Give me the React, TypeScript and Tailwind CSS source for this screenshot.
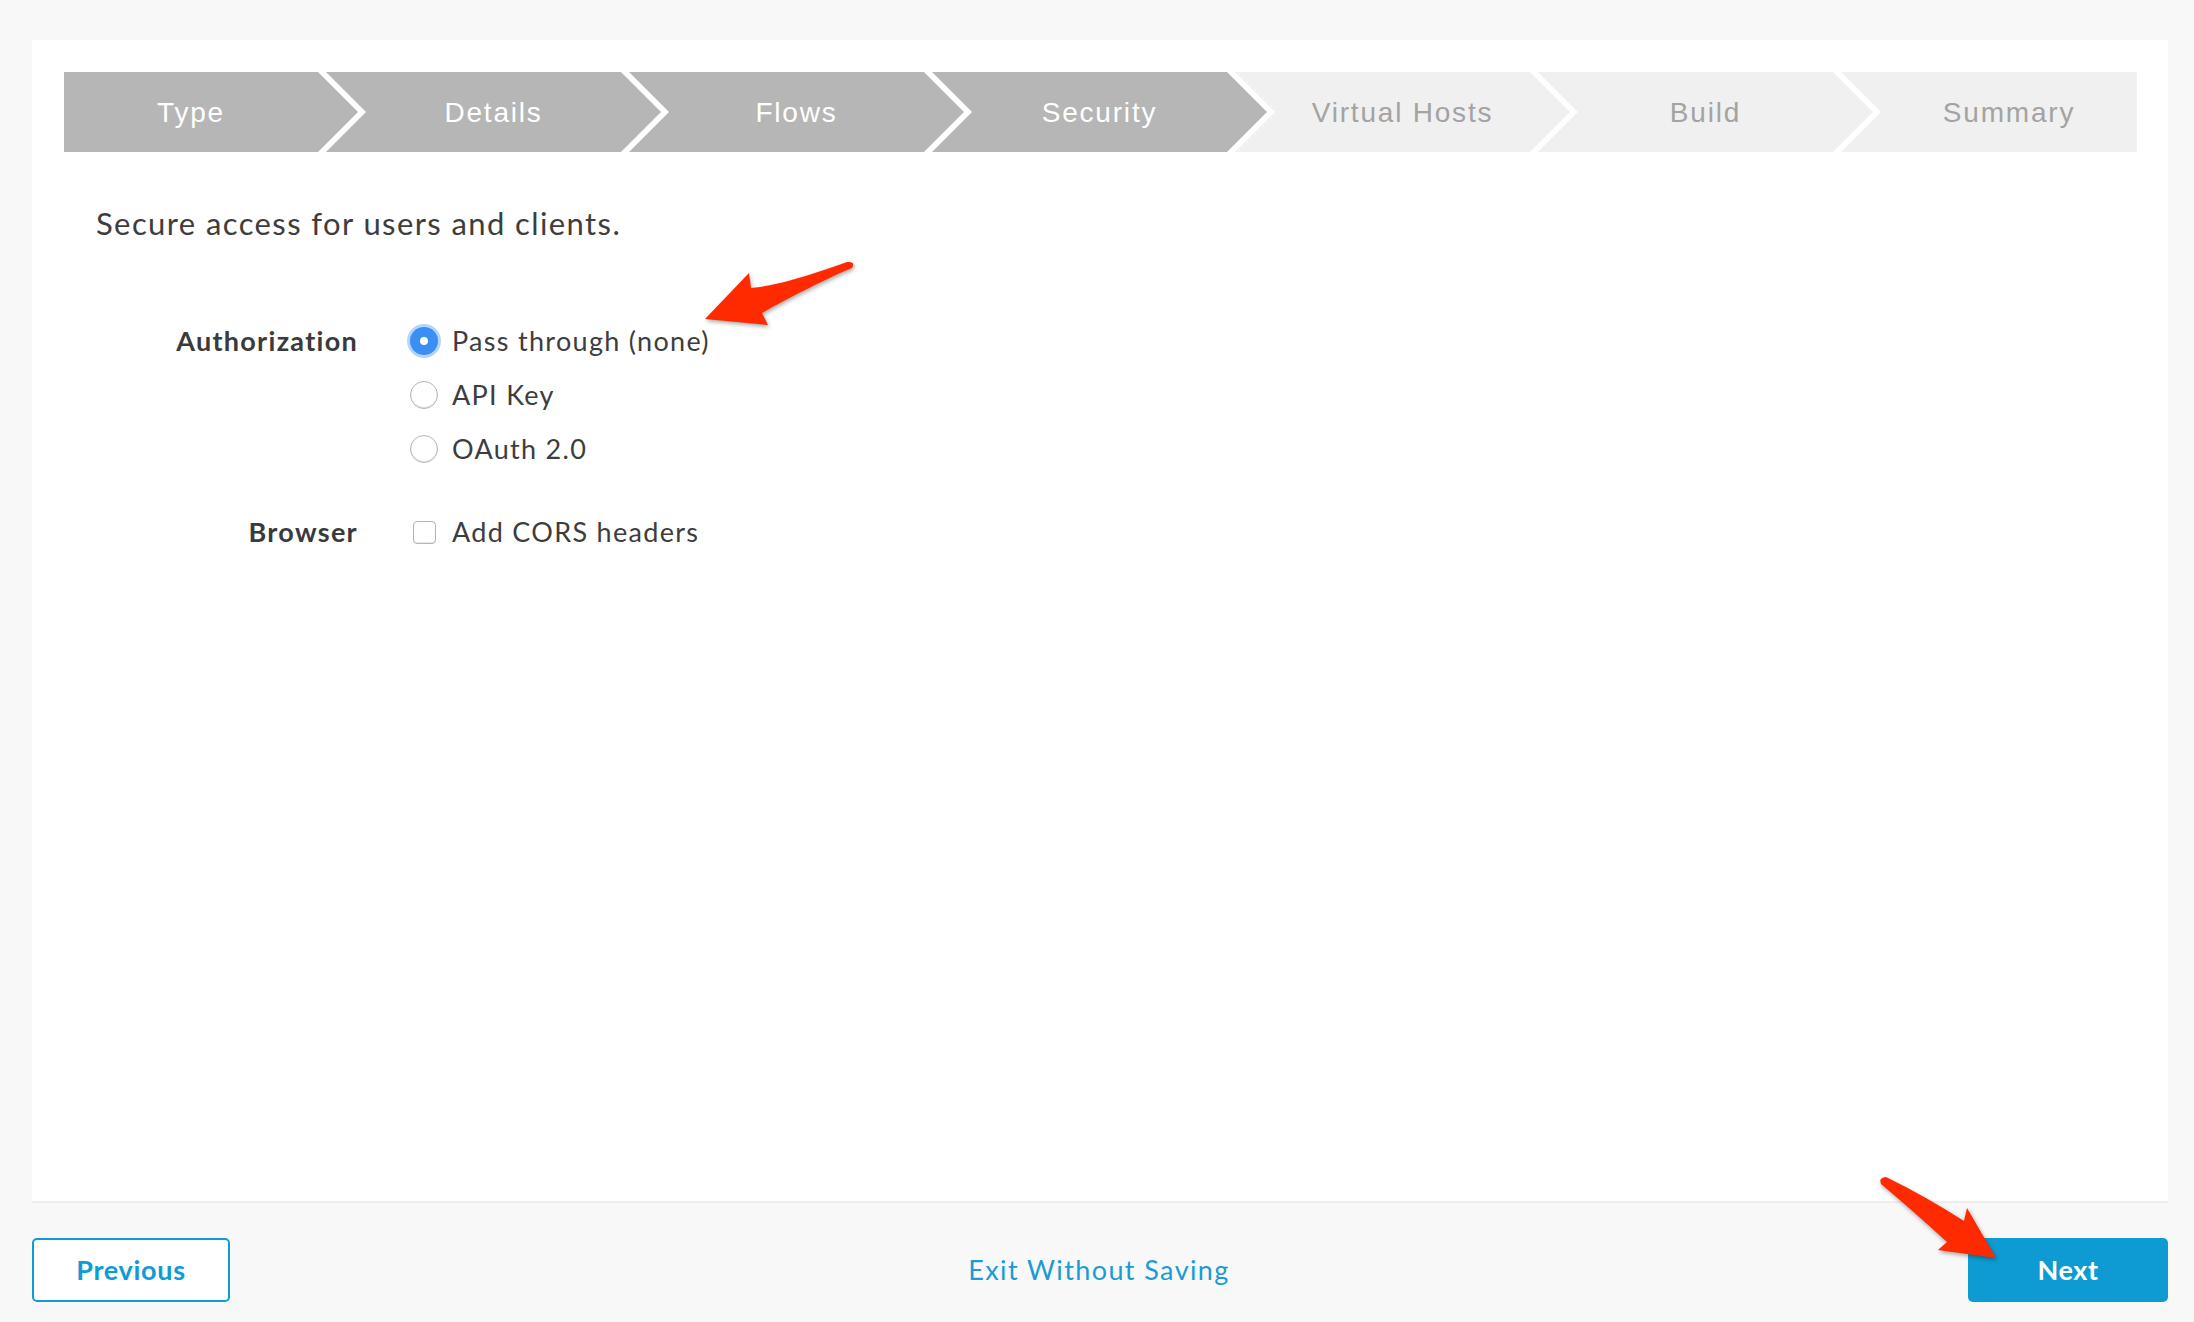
import React from 'react';

type Step = { label: string; done: boolean };

const steps: Step[] = [
  { label: 'Type', done: true },
  { label: 'Details', done: true },
  { label: 'Flows', done: true },
  { label: 'Security', done: true },
  { label: 'Virtual Hosts', done: false },
  { label: 'Build', done: false },
  { label: 'Summary', done: false },
];

function Stepper() {
  return (
    <div className="flex h-[80px] w-[2073px]">
      {steps.map((s, i) => {
        const colors = s.done ? 'bg-[#b6b6b6] text-white' : 'bg-[#f0f0f0] text-[#a3a3a3]';
        let shape = '';
        if (i === 0) {
          shape =
            'w-[294px] shrink-0 pr-[40px] [clip-path:polygon(0_0,calc(100%_-_40px)_0,100%_50%,calc(100%_-_40px)_100%,0_100%)]';
        } else if (i === steps.length - 1) {
          shape = 'flex-1 -ml-[32px] pl-[40px] [clip-path:polygon(0_0,100%_0,100%_100%,0_100%,40px_50%)]';
        } else {
          shape =
            'w-[335px] shrink-0 -ml-[32px] px-[40px] [clip-path:polygon(0_0,calc(100%_-_40px)_0,100%_50%,calc(100%_-_40px)_100%,0_100%,40px_50%)]';
        }
        return (
          <div
            key={s.label}
            className={`${shape} ${colors} h-full flex items-center justify-center pt-[2px] font-['Liberation_Sans',Arial,sans-serif] text-[28px] tracking-[1.8px]`}
          >
            {s.label}
          </div>
        );
      })}
    </div>
  );
}

function RadioOn() {
  return (
    <span className="w-[28px] h-[28px] rounded-full bg-[#3b8ef2] shadow-[0_0_0_3px_rgba(90,160,246,0.45)] flex items-center justify-center shrink-0">
      <span className="w-[8px] h-[8px] rounded-full bg-white" />
    </span>
  );
}

function RadioOff() {
  return (
    <span className="w-[28px] h-[28px] rounded-full bg-white border border-[#b4b4b4] shadow-[inset_0_-1px_1px_rgba(0,0,0,0.12)] shrink-0" />
  );
}

function Checkbox() {
  return (
    <span className="w-[28px] h-[28px] flex items-center justify-center shrink-0">
      <span className="w-[23px] h-[23px] rounded-[4px] bg-white border border-[#b4b4b4] shadow-[inset_0_-1px_1px_rgba(0,0,0,0.1)]" />
    </span>
  );
}

function Row({ control, label }: { control: React.ReactNode; label: string }) {
  return (
    <div className="flex items-center h-[54px] gap-[14px]">
      {control}
      <span className="text-[27px] tracking-[1.3px] text-[#3d3d3d]">{label}</span>
    </div>
  );
}

function Arrows() {
  return (
    <svg
      className="absolute left-0 top-0 pointer-events-none drop-shadow-[1px_2px_2px_rgba(0,0,0,0.35)]"
      width="2194"
      height="1322"
      viewBox="0 0 2194 1322"
    >
      <path
        d="M705 319 L749 273 L751 288 C777 286 817 273 847 262 Q856 261 852 268 C830 277 790 297 762 313 L768 325 Z"
        fill="#ff2a00"
      />
      <path
        d="M1996 1258 L1967 1208 L1964 1221 Q1925 1196 1886 1177 Q1878 1178 1881 1184 Q1912 1210 1947 1242 L1938 1250 Z"
        fill="#ff2a00"
      />
    </svg>
  );
}

export default function App() {
  return (
    <div className="relative w-[2194px] h-[1322px] bg-[#f8f8f8] overflow-hidden font-['Lato','Noto_Sans',sans-serif]">
      <div className="pt-[40px] pl-[32px] w-[2168px]">
        <div className="w-[2136px] h-[1163px] bg-white border-b-2 border-[#eeeeee] px-[32px] pt-[32px]">
          <Stepper />
          <div className="px-[32px]">
            <p className="mt-[53px] text-[31px] leading-[36px] tracking-[1.4px] text-[#3d3d3d]">
              Secure access for users and clients.
            </p>
            <div className="mt-[73px] flex">
              <div className="w-[262px] text-right">
                <div className="h-[54px] flex items-center justify-end text-[27px] font-bold tracking-[1.3px] text-[#3a3a3a]">
                  Authorization
                </div>
              </div>
              <div className="ml-[52px] flex flex-col">
                <Row control={<RadioOn />} label="Pass through (none)" />
                <Row control={<RadioOff />} label="API Key" />
                <Row control={<RadioOff />} label="OAuth 2.0" />
              </div>
            </div>
            <div className="mt-[29px] flex">
              <div className="w-[262px] h-[54px] flex items-center justify-end text-[27px] font-bold tracking-[1.3px] text-[#3a3a3a]">
                Browser
              </div>
              <div className="ml-[52px]">
                <Row control={<Checkbox />} label="Add CORS headers" />
              </div>
            </div>
          </div>
        </div>
        <div className="mt-[35px] flex items-center justify-between w-[2136px]">
          <button className="w-[198px] h-[64px] rounded-[5px] border-2 border-[#0f9bd5] bg-white text-[27px] font-bold tracking-[0.7px] text-[#0f9bd5]">
            Previous
          </button>
          <span className="text-[27px] text-[#1a9bd6] tracking-[1.4px]">Exit Without Saving</span>
          <button className="w-[200px] h-[64px] rounded-[5px] bg-[#0e9bd4] text-[27px] font-bold tracking-[0.6px] text-white">
            Next
          </button>
        </div>
      </div>
      <Arrows />
    </div>
  );
}
